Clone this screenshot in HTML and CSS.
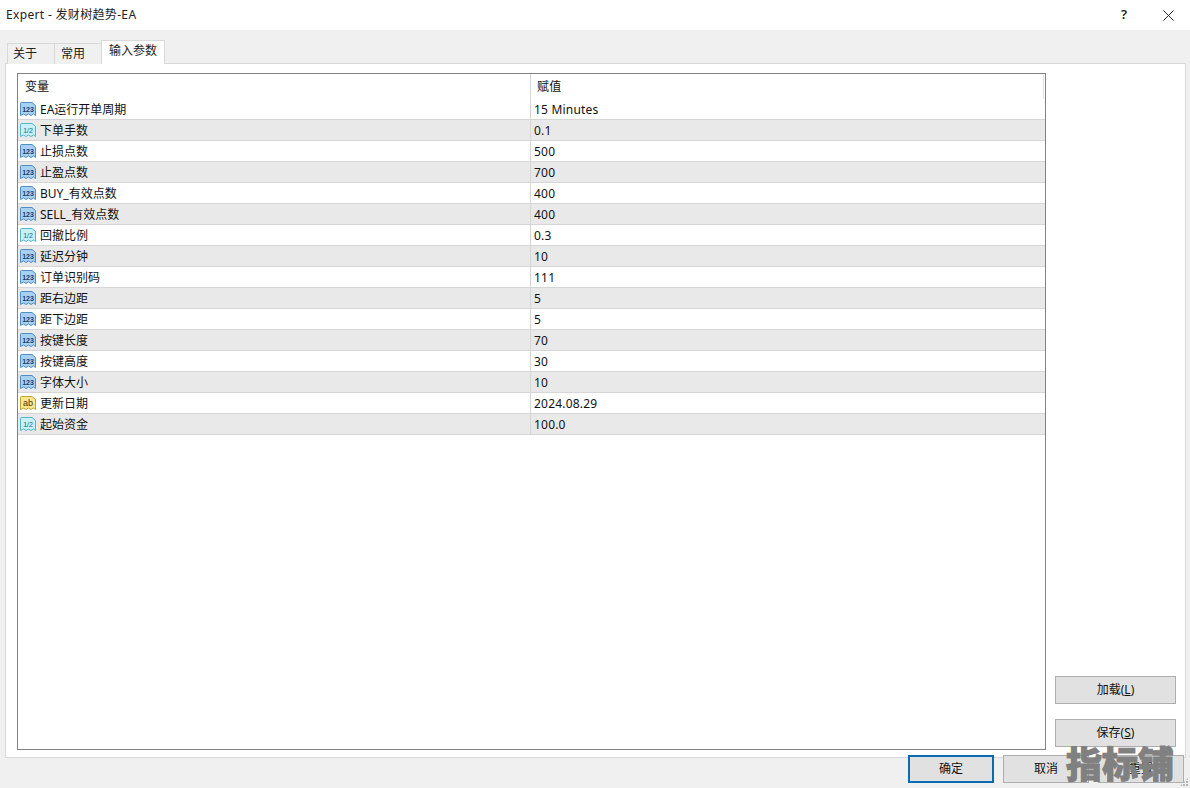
FILE: index.html
```html
<!DOCTYPE html>
<html lang="zh">
<head>
<meta charset="utf-8">
<title>Expert - 发财树趋势-EA</title>
<link rel="stylesheet" href="styles.css">
</head>
<body>
<svg class="defs" width="0" height="0" aria-hidden="true">
  <defs>
    <symbol id="doc" viewBox="0 0 16 16">
      <path d="M.5 2.5 Q.5 1.5 1.5 1.5 H12 L15.5 4.5 V14.5 L13.5 13 L11 14.5 L8.5 13 L6 14.5 L3.5 13 L.5 14.5 Z"/>
    </symbol>
  </defs>
</svg>
<div class="window">
  <header class="titlebar">
    <span class="title">Expert - 发财树趋势-EA</span>
    <div class="controls">
      <span class="help">?</span>
      <svg class="close" width="11" height="11" viewBox="0 0 11 11"><path d="M.5.5l10 10M10.5.5l-10 10"/></svg>
    </div>
  </header>
  <nav class="tabs">
    <span class="tab tab-a">关于</span>
    <span class="tab tab-b">常用</span>
    <span class="tab tab-on">输入参数</span>
  </nav>
  <main class="page">
    <section class="grid">
      <div class="row head"><span class="c1 h1">变量</span><span class="c2 h2">赋值</span></div>
      <div class="row"><span class="c1"><svg class="ico int"><use href="#doc"/><text x="8" y="11">123</text></svg>EA运行开单周期</span><span class="c2">15 Minutes</span></div>
      <div class="row alt"><span class="c1"><svg class="ico dbl"><use href="#doc"/><text x="8" y="11">1/2</text></svg>下单手数</span><span class="c2">0.1</span></div>
      <div class="row"><span class="c1"><svg class="ico int"><use href="#doc"/><text x="8" y="11">123</text></svg>止损点数</span><span class="c2">500</span></div>
      <div class="row alt"><span class="c1"><svg class="ico int"><use href="#doc"/><text x="8" y="11">123</text></svg>止盈点数</span><span class="c2">700</span></div>
      <div class="row"><span class="c1"><svg class="ico int"><use href="#doc"/><text x="8" y="11">123</text></svg>BUY_有效点数</span><span class="c2">400</span></div>
      <div class="row alt"><span class="c1"><svg class="ico int"><use href="#doc"/><text x="8" y="11">123</text></svg>SELL_有效点数</span><span class="c2">400</span></div>
      <div class="row"><span class="c1"><svg class="ico dbl"><use href="#doc"/><text x="8" y="11">1/2</text></svg>回撤比例</span><span class="c2">0.3</span></div>
      <div class="row alt"><span class="c1"><svg class="ico int"><use href="#doc"/><text x="8" y="11">123</text></svg>延迟分钟</span><span class="c2">10</span></div>
      <div class="row"><span class="c1"><svg class="ico int"><use href="#doc"/><text x="8" y="11">123</text></svg>订单识别码</span><span class="c2">111</span></div>
      <div class="row alt"><span class="c1"><svg class="ico int"><use href="#doc"/><text x="8" y="11">123</text></svg>距右边距</span><span class="c2">5</span></div>
      <div class="row"><span class="c1"><svg class="ico int"><use href="#doc"/><text x="8" y="11">123</text></svg>距下边距</span><span class="c2">5</span></div>
      <div class="row alt"><span class="c1"><svg class="ico int"><use href="#doc"/><text x="8" y="11">123</text></svg>按键长度</span><span class="c2">70</span></div>
      <div class="row"><span class="c1"><svg class="ico int"><use href="#doc"/><text x="8" y="11">123</text></svg>按键高度</span><span class="c2">30</span></div>
      <div class="row alt"><span class="c1"><svg class="ico int"><use href="#doc"/><text x="8" y="11">123</text></svg>字体大小</span><span class="c2">10</span></div>
      <div class="row"><span class="c1"><svg class="ico str"><use href="#doc"/><text x="8" y="11">ab</text></svg>更新日期</span><span class="c2">2024.08.29</span></div>
      <div class="row alt"><span class="c1"><svg class="ico dbl"><use href="#doc"/><text x="8" y="11">1/2</text></svg>起始资金</span><span class="c2">100.0</span></div>
    </section>
    <aside class="side">
      <button class="btn side-btn">加载(<u>L</u>)</button>
      <button class="btn side-btn">保存(<u>S</u>)</button>
    </aside>
  </main>
  <footer class="actions">
    <button class="btn act primary">确定</button>
    <button class="btn act">取消</button>
    <button class="btn act">重置</button>
  </footer>
</div>
<div class="grip"></div>
<div class="watermark">指标铺</div>
</body>
</html>
```
FILE: styles.css
```css
* { box-sizing: border-box; }
html, body { margin: 0; padding: 0; }
body {
  width: 1190px;
  height: 788px;
  overflow: hidden;
  position: relative;
  background: #f0f0f0;
  color: #111;
  font: 12px/16px "Noto Sans", "Noto Sans CJK SC", sans-serif;
}
.defs { position: absolute; }
.window { display: flex; flex-direction: column; height: 788px; }

.titlebar {
  height: 30px;
  flex: none;
  background: #fff;
  display: flex;
  align-items: center;
  justify-content: space-between;
  padding: 0 16px 0 6px;
}
.title { font-size: 12px; color: #222; letter-spacing: .33px; }
.controls { display: flex; align-items: center; gap: 36px; }
.help { font-size: 13px; font-weight: 600; color: #222; position: relative; top: -1px; }
.close { fill: none; stroke: #222; stroke-width: 1; display: block; }

.tabs {
  height: 34px;
  flex: none;
  padding: 12px 0 0 7px;
  display: flex;
  align-items: flex-end;
  position: relative;
  z-index: 1;
  margin-bottom: -1px;
}
.tab {
  height: 21px;
  border: 1px solid #d9d9d9;
  border-bottom: none;
  background: #f0f0f0;
  display: flex;
  align-items: center;
  padding: 0 0 1px 5px;
  margin-right: -1px;
  color: #222;
}
.tab-a { width: 48px; }
.tab-b { width: 48px; padding-left: 6px; }
.tab-on {
  width: 64px;
  height: 24px;
  background: #fff;
  padding: 0 0 3px 7px;
}

.page {
  height: 695px;
  flex: none;
  margin: 0 4px 0 5px;
  background: #fff;
  border: 1px solid #d9d9d9;
  padding: 9px 9px 7px 11px;
  display: flex;
  gap: 9px;
}
.grid {
  width: 1029px;
  flex: none;
  border: 1px solid #828282;
  background: #fff;
}
.row { display: flex; height: 21px; border-bottom: 1px solid #d6d6d6; }
.row.alt { background: #e9e9e9; }
.row.head { height: 25px; border-bottom: none; }
.c1 {
  width: 513px;
  flex: none;
  display: flex;
  align-items: center;
  gap: 4px;
  padding: 2px 0 0 2px;
  border-right: 1px solid #d6d6d6;
  white-space: nowrap;
}
.c2 { flex: 1; display: flex; align-items: center; padding: 2px 0 0 3px; letter-spacing: .2px; }
.head .c1 { padding: 0 0 0 7px; }
.head .c2 { padding: 0 0 0 6px; position: relative; }
.head .c2::after {
  content: "";
  position: absolute;
  right: 1px;
  top: 1px;
  height: 24px;
  border-right: 1px solid #e0e0e0;
}

.ico { width: 16px; height: 16px; flex: none; position: relative; top: -1px; }
.ico text {
  font-family: "Liberation Sans", sans-serif;
  font-size: 7px;
  font-weight: 700;
  text-anchor: middle;
  stroke: none;
}
.int { fill: #a8d0f2; stroke: #4f8dc6; }
.int text { fill: #123f78; }
.dbl { fill: #c8f0f6; stroke: #55b4ce; }
.dbl text { fill: #0f6a88; font-weight: 400; }
.str { fill: #fbe88e; stroke: #c4a232; }
.str text { fill: #3f3208; font-size: 9px; font-weight: 400; }

.btn {
  font: inherit;
  color: #111;
  background: #e1e1e1;
  border: 1px solid #adadad;
  padding: 0;
  display: block;
}
.side {
  width: 121px;
  flex: none;
  display: flex;
  flex-direction: column;
  justify-content: flex-end;
  gap: 15px;
  padding-bottom: 3px;
}
.side-btn { height: 28px; }

.actions {
  display: flex;
  gap: 9px;
  justify-content: flex-end;
  padding-right: 6px;
  margin-top: -3px;
  position: relative;
}
.act { width: 86px; height: 28px; }
.primary { border: 2px solid #0a6cb0; }

.grip {
  position: absolute;
  right: 2px;
  bottom: 2px;
  width: 8px;
  height: 8px;
  background-image: radial-gradient(circle at 1px 1px, #b4b4b4 1px, transparent 1px);
  background-size: 3px 3px;
  clip-path: polygon(100% 0, 100% 100%, 0 100%);
}

.watermark {
  position: absolute;
  left: 1066px;
  top: 741px;
  width: 110px;
  font: 900 36px/42px "Noto Sans CJK SC", sans-serif;
  -webkit-text-stroke: 1px #808080;
  color: #808080;
  white-space: nowrap;
}
```
